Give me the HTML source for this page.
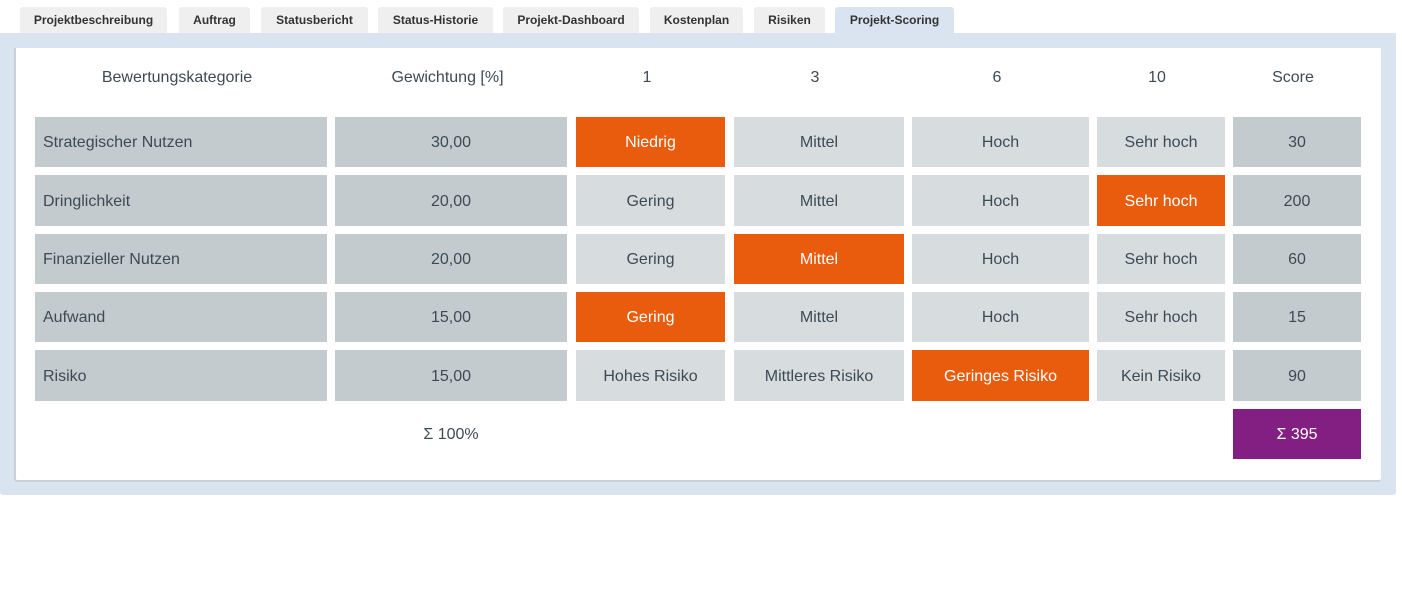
<!DOCTYPE html>
<html><head><meta charset="utf-8"><style>
*{margin:0;padding:0;box-sizing:border-box}
body{width:1402px;height:600px;background:#fff;font-family:"Liberation Sans",Arial,sans-serif;position:relative;overflow:hidden}
.tab{position:absolute;top:7px;height:26px;background:#efefef;border-radius:3px 3px 0 0;font-size:12px;font-weight:bold;color:#333;text-align:center;line-height:26px}
.tab.act{background:#d9e4f0}
#outer{position:absolute;left:0;top:33px;width:1396px;height:462px;background:#d9e4f0;border-radius:0 0 3px 3px}
#inner{position:absolute;left:14px;top:48px;width:1367px;height:434px;background:#fff;border-left:2px solid #c9d0d6;border-bottom:2px solid #c9d0d6;border-radius:0 0 3px 3px}
.c{position:absolute;font-size:16px;color:#3e4a52;display:flex;align-items:center;justify-content:center;padding-top:2px}
.h{height:20px}
.d{background:#c3cbce}.l{background:#d7dddf}.o{background:#e95c0e;color:#fff}.p{background:#831f82;color:#fff}
.left{justify-content:flex-start;padding-left:8px}
</style></head><body>
<div class="tab" style="left:20px;width:147px">Projektbeschreibung</div>
<div class="tab" style="left:179px;width:71px">Auftrag</div>
<div class="tab" style="left:261px;width:107px">Statusbericht</div>
<div class="tab" style="left:378px;width:115px">Status-Historie</div>
<div class="tab" style="left:503px;width:136px">Projekt-Dashboard</div>
<div class="tab" style="left:650px;width:93px">Kostenplan</div>
<div class="tab" style="left:754px;width:71px">Risiken</div>
<div class="tab act" style="left:835px;width:119px">Projekt-Scoring</div>
<div id="outer"></div><div id="inner"></div>

<div class="c h" style="left:35px;top:67px;width:284px">Bewertungskategorie</div>
<div class="c h" style="left:335px;top:67px;width:225px">Gewichtung [%]</div>
<div class="c h" style="left:576px;top:67px;width:142px">1</div>
<div class="c h" style="left:734px;top:67px;width:162px">3</div>
<div class="c h" style="left:912px;top:67px;width:170px">6</div>
<div class="c h" style="left:1097px;top:67px;width:120px">10</div>
<div class="c h" style="left:1233px;top:67px;width:120px">Score</div>

<div class="c d left" style="left:35px;top:117px;width:292px;height:50px">Strategischer Nutzen</div>
<div class="c d" style="left:335px;top:117px;width:232px;height:50px">30,00</div>
<div class="c o" style="left:576px;top:117px;width:149px;height:50px">Niedrig</div>
<div class="c l" style="left:734px;top:117px;width:170px;height:50px">Mittel</div>
<div class="c l" style="left:912px;top:117px;width:177px;height:50px">Hoch</div>
<div class="c l" style="left:1097px;top:117px;width:128px;height:50px">Sehr hoch</div>
<div class="c d" style="left:1233px;top:117px;width:128px;height:50px">30</div>

<div class="c d left" style="left:35px;top:175px;width:292px;height:51px">Dringlichkeit</div>
<div class="c d" style="left:335px;top:175px;width:232px;height:51px">20,00</div>
<div class="c l" style="left:576px;top:175px;width:149px;height:51px">Gering</div>
<div class="c l" style="left:734px;top:175px;width:170px;height:51px">Mittel</div>
<div class="c l" style="left:912px;top:175px;width:177px;height:51px">Hoch</div>
<div class="c o" style="left:1097px;top:175px;width:128px;height:51px">Sehr hoch</div>
<div class="c d" style="left:1233px;top:175px;width:128px;height:51px">200</div>

<div class="c d left" style="left:35px;top:234px;width:292px;height:50px">Finanzieller Nutzen</div>
<div class="c d" style="left:335px;top:234px;width:232px;height:50px">20,00</div>
<div class="c l" style="left:576px;top:234px;width:149px;height:50px">Gering</div>
<div class="c o" style="left:734px;top:234px;width:170px;height:50px">Mittel</div>
<div class="c l" style="left:912px;top:234px;width:177px;height:50px">Hoch</div>
<div class="c l" style="left:1097px;top:234px;width:128px;height:50px">Sehr hoch</div>
<div class="c d" style="left:1233px;top:234px;width:128px;height:50px">60</div>

<div class="c d left" style="left:35px;top:292px;width:292px;height:50px">Aufwand</div>
<div class="c d" style="left:335px;top:292px;width:232px;height:50px">15,00</div>
<div class="c o" style="left:576px;top:292px;width:149px;height:50px">Gering</div>
<div class="c l" style="left:734px;top:292px;width:170px;height:50px">Mittel</div>
<div class="c l" style="left:912px;top:292px;width:177px;height:50px">Hoch</div>
<div class="c l" style="left:1097px;top:292px;width:128px;height:50px">Sehr hoch</div>
<div class="c d" style="left:1233px;top:292px;width:128px;height:50px">15</div>

<div class="c d left" style="left:35px;top:350px;width:292px;height:51px">Risiko</div>
<div class="c d" style="left:335px;top:350px;width:232px;height:51px">15,00</div>
<div class="c l" style="left:576px;top:350px;width:149px;height:51px">Hohes Risiko</div>
<div class="c l" style="left:734px;top:350px;width:170px;height:51px">Mittleres Risiko</div>
<div class="c o" style="left:912px;top:350px;width:177px;height:51px">Geringes Risiko</div>
<div class="c l" style="left:1097px;top:350px;width:128px;height:51px">Kein Risiko</div>
<div class="c d" style="left:1233px;top:350px;width:128px;height:51px">90</div>

<div class="c" style="left:335px;top:409px;width:232px;height:50px">Σ 100%</div>
<div class="c p" style="left:1233px;top:409px;width:128px;height:50px">Σ 395</div>
</body></html>
